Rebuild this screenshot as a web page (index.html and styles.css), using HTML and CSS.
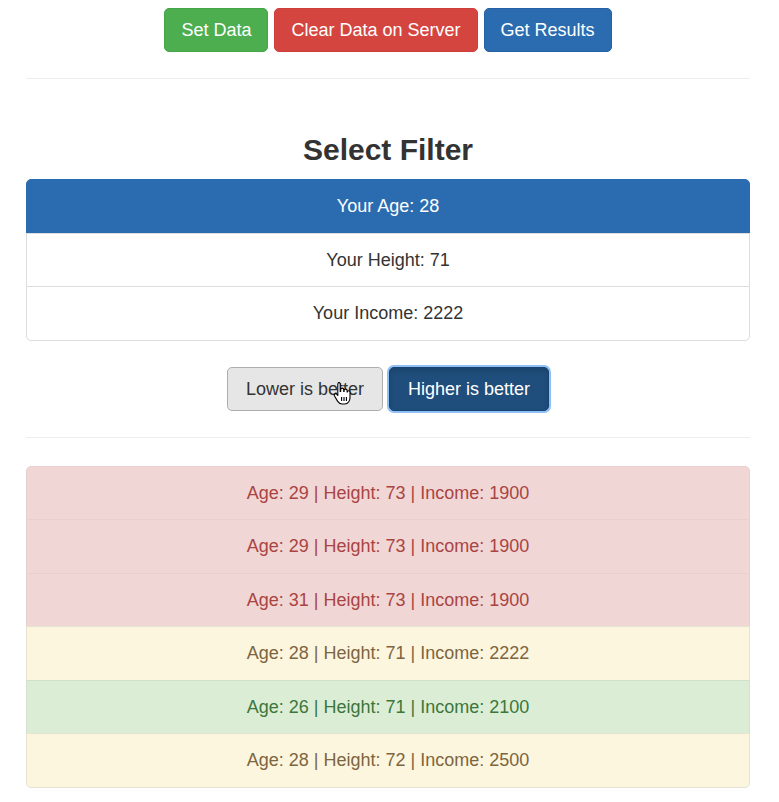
FILE: index.html
```html
<!DOCTYPE html>
<html>
<head>
<meta charset="utf-8">
<link rel="stylesheet" href="styles.css">
</head>
<body>
<div class="container">
  <div class="actions">
    <button class="btn btn-success">Set Data</button>
    <button class="btn btn-danger">Clear Data on Server</button>
    <button class="btn btn-primary">Get Results</button>
  </div>
  <hr class="rule">
  <h3 class="title">Select Filter</h3>
  <ul class="list">
    <li class="item active">Your Age: 28</li>
    <li class="item">Your Height: 71</li>
    <li class="item">Your Income: 2222</li>
  </ul>
  <div class="actions">
    <button class="btn btn-default hover wide">Lower is better<svg class="cursor" width="18" height="24" viewBox="0 0 18 24"><path d="M5.5 1.5c1 0 1.7.7 1.7 1.7v7.3h.5V8.6c0-.9.7-1.5 1.5-1.5s1.5.6 1.5 1.5v1.9h.4V9.6c0-.9.7-1.5 1.5-1.5s1.5.6 1.5 1.5v1.4h.3c0-.8.6-1.3 1.3-1.3s1.3.6 1.3 1.4v5.4c0 3.3-2 6.5-5.2 6.5H9c-2 0-3.2-1-4.3-2.6L1.5 15c-.5-.8-.3-1.7.4-2.1.7-.4 1.5-.2 2 .4l.9 1.2V3.2c0-1 .7-1.7 1.7-1.7z" fill="#fff" stroke="#000" stroke-width="1.1" stroke-linejoin="round"/><path d="M8.6 16v4M11 16v4M13.4 16v4" stroke="#000" stroke-width="1.1"/></svg></button>
    <button class="btn btn-primary pressed wide">Higher is better</button>
  </div>
  <hr class="rule">
  <ul class="list results">
    <li class="item danger">Age: 29 | Height: 73 | Income: 1900</li>
    <li class="item danger">Age: 29 | Height: 73 | Income: 1900</li>
    <li class="item danger">Age: 31 | Height: 73 | Income: 1900</li>
    <li class="item warning">Age: 28 | Height: 71 | Income: 2222</li>
    <li class="item success">Age: 26 | Height: 71 | Income: 2100</li>
    <li class="item warning">Age: 28 | Height: 72 | Income: 2500</li>
  </ul>
</div>
</body>
</html>
```

FILE: styles.css
```css
html, body {
  margin: 0;
  padding: 0;
  background: #fff;
}
body {
  font-family: "Liberation Sans", Arial, Helvetica, sans-serif;
  font-size: 18px;
  line-height: 26px;
  color: #333;
}
.container {
  width: 724px;
  margin: 0 0 0 26px;
  padding-top: 8px;
}
.actions {
  display: flex;
  justify-content: center;
  gap: 6px;
}
.btn {
  font-family: inherit;
  font-size: 18px;
  line-height: 26px;
  padding: 8px 16px;
  border: 1px solid transparent;
  border-radius: 5px;
  color: #fff;
  cursor: pointer;
  margin: 0;
  position: relative;
}
.btn.wide {
  padding: 8px 18px;
}
.btn-success {
  background: #4cae4f;
  border-color: #45a548;
}
.btn-danger {
  background: #d5453f;
  border-color: #cd3f3a;
}
.btn-primary {
  background: #2b6cb0;
  border-color: #2662a3;
}
.btn-default {
  background: #e6e6e6;
  border-color: #adadad;
  color: #333;
}
.btn-primary.pressed {
  background: #1f4e7c;
  border-color: #1a4270;
  box-shadow: 0 0 0 2px #8fc0f5, inset 0 3px 5px rgba(0,0,0,0.125);
}
.cursor {
  position: absolute;
  left: 105px;
  top: 13px;
}
.rule {
  border: 0;
  border-top: 1px solid #eee;
  margin: 26px 0 26px;
  height: 0;
}
.title {
  font-size: 30px;
  font-weight: bold;
  line-height: 34px;
  text-align: center;
  margin: 54px 0 12px;
  color: #333;
}
.list {
  list-style: none;
  margin: 0 0 26px;
  padding: 0;
}
.item {
  text-align: center;
  padding: 13px 20px;
  line-height: 26.5px;
  border: 1px solid #ddd;
  margin-bottom: -1px;
  background: #fff;
}
.item:first-child {
  border-top-left-radius: 5px;
  border-top-right-radius: 5px;
}
.item:last-child {
  border-bottom-left-radius: 5px;
  border-bottom-right-radius: 5px;
  margin-bottom: 0;
}
.item.active {
  background: #2b6cb0;
  border-color: #2b6cb0;
  color: #fff;
}
.results {
  margin-top: 28px;
}
.item.danger {
  background: #f1d6d6;
  color: #a94442;
  border-color: #e8d0d0;
}
.item.warning {
  background: #fcf6df;
  color: #7d6540;
  border-color: #e6e2d2;
}
.item.success {
  background: #dbeed5;
  color: #3c763d;
  border-color: #d2e0cd;
}
```
